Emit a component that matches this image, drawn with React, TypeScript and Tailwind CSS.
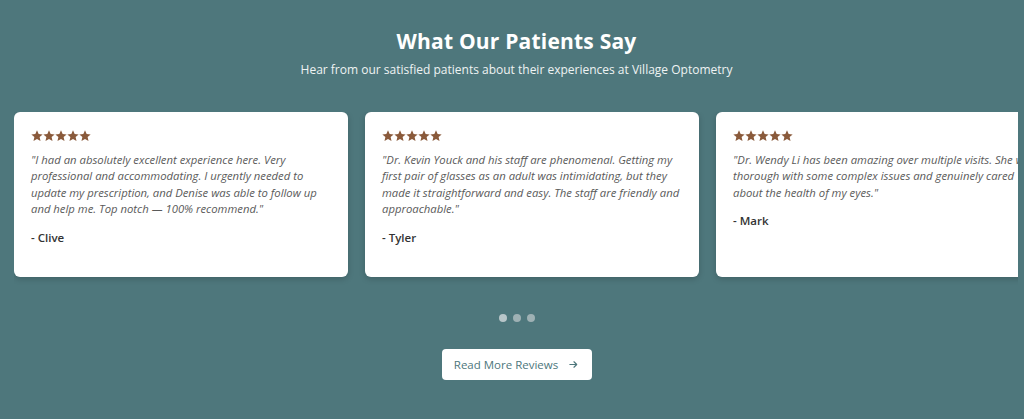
const reviews = [
  {
    text: '"I had an absolutely excellent experience here. Very professional and accommodating. I urgently needed to update my prescription, and Denise was able to follow up and help me. Top notch — 100% recommend."',
    name: '- Clive',
  },
  {
    text: '"Dr. Kevin Youck and his staff are phenomenal. Getting my first pair of glasses as an adult was intimidating, but they made it straightforward and easy. The staff are friendly and approachable."',
    name: '- Tyler',
  },
  {
    text: '"Dr. Wendy Li has been amazing over multiple visits. She was thorough with some complex issues and genuinely cared about the health of my eyes."',
    name: '- Mark',
  },
];

function Stars() {
  return (
    <div className="flex text-[#8a5a3b]">
      {[0, 1, 2, 3, 4].map((i) => (
        <svg key={i} viewBox="0 0 20 20" className="h-[12px] w-[12px]" fill="currentColor">
          <path d="M10 0.6l2.75 6.1 6.65.6-5.05 4.45 1.5 6.55L10 14.9l-5.85 3.4 1.5-6.55L0.6 7.3l6.65-.6z" />
        </svg>
      ))}
    </div>
  );
}

function ReviewCard({ text, name }: { text: string; name: string }) {
  return (
    <div className="min-h-[165px] w-[334px] shrink-0 rounded-md bg-white pl-[17px] pr-[9px] pt-[18px] pb-6 shadow-[0_2px_6px_rgba(0,0,0,0.18)]">
      <Stars />
      <p className="mt-[10px] text-[11.3px] leading-[16.4px] italic text-[#5a5a5a]">{text}</p>
      <p className="mt-[11px] text-[11.5px] font-semibold text-[#333]">{name}</p>
    </div>
  );
}

export default function App() {
  return (
    <section className="h-[419px] overflow-hidden bg-[#4e777c] pt-[27px] font-['Open_Sans',sans-serif]">
      <div className="pl-[9px]">
        <h2 className="text-center text-[21px] leading-[28px] font-bold tracking-[0.2px] text-white">
          What Our Patients Say
        </h2>
        <p className="mt-[6px] text-center text-[12px] leading-[18px] text-[#eef3f3]">
          Hear from our satisfied patients about their experiences at Village Optometry
        </p>
      </div>

      <div className="mt-[33px] ml-[14px] mr-[6px] overflow-hidden pb-2">
        <div className="flex items-stretch gap-[17px]">
          {reviews.map((r) => (
            <ReviewCard key={r.name} text={r.text} name={r.name} />
          ))}
        </div>
      </div>

      <div className="mt-[29px] flex justify-center gap-[6px] pl-[9px]">
        <span className="h-[8px] w-[8px] rounded-full bg-[#b8c6c9]" />
        <span className="h-[8px] w-[8px] rounded-full bg-[#9eb1b4]" />
        <span className="h-[8px] w-[8px] rounded-full bg-[#9eb1b4]" />
      </div>

      <div className="mt-[27px] flex justify-center pl-[9px]">
        <button className="flex h-[31px] w-[150px] items-center justify-center gap-[10px] rounded-[4px] bg-white text-[11.5px] text-[#4e777c]">
          <span>Read More Reviews</span>
          <svg viewBox="0 0 24 24" className="h-[11px] w-[11px]" fill="none" stroke="currentColor" strokeWidth="2.5" strokeLinecap="round" strokeLinejoin="round">
            <path d="M4 12h15M13 6l6 6-6 6" />
          </svg>
        </button>
      </div>
    </section>
  );
}
